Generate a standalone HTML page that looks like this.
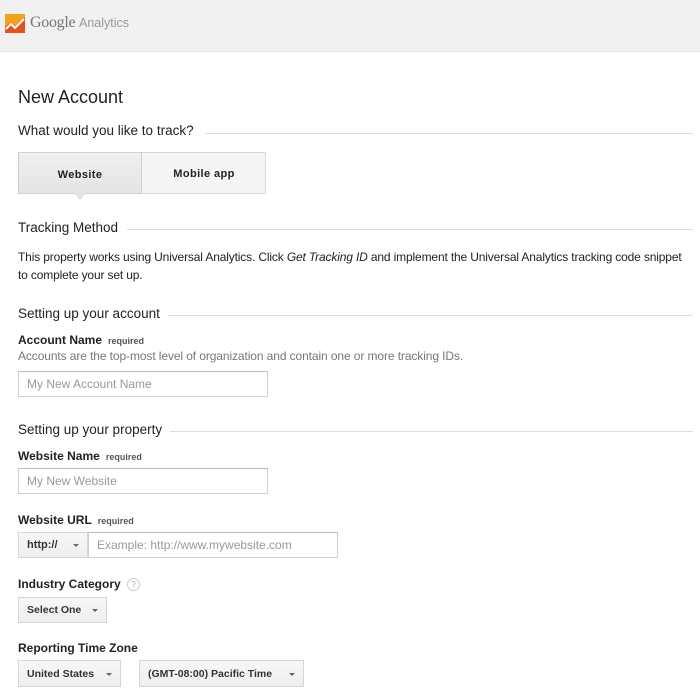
<!DOCTYPE html>
<html><head><meta charset="utf-8"><style>
*{margin:0;padding:0;box-sizing:border-box}
body{width:700px;height:695px;background:#fff;font-family:"Liberation Sans",Arial,sans-serif;color:#222;position:relative;overflow:hidden}
.a{position:absolute;white-space:nowrap}
.hdr{position:absolute;left:0;top:0;width:700px;height:52px;background:#f1f1f1;border-bottom:1px solid #e4e4e4}
.h2{font-size:13.5px;color:#222}
.line{position:absolute;height:1px;background:#ddd}
.lbl{font-size:12px;font-weight:bold;color:#222}
.req{font-size:9px;font-weight:bold;color:#555;margin-left:6px}
.inp{position:absolute;border:1px solid #cfcfcf;border-top-color:#bbb;background:#fff;font-size:12px;color:#999;padding-left:8px;display:flex;align-items:center}
.sel{position:absolute;border:1px solid #d6d6d6;background:linear-gradient(#f7f7f7,#eeeeee);font-size:11px;font-weight:bold;color:#333;padding-left:8px;display:flex;align-items:center;letter-spacing:0}
.car{position:absolute;right:8px;top:50%;margin-top:-1px;border:3px solid transparent;border-top:3px solid #666;border-bottom:0;width:0;height:0}
</style></head><body>
<div class="hdr"></div>
<svg class="a" style="left:5px;top:14px" width="20" height="19" viewBox="0 0 20 19">
<rect width="20" height="19" fill="#f7a01c"/>
<path d="M0 19V13L6 8l4 4 10-9v16z" fill="#e2521f"/>
<path d="M1 15l5-5 4 4 9-9" stroke="#fff" stroke-width="2" fill="none"/>
</svg>
<div class="a" style="left:30px;top:14px;font-family:'Liberation Serif',serif;font-size:16px;color:#777;letter-spacing:-0.3px">Google</div>
<div class="a" style="left:79px;top:16px;font-size:12.5px;color:#999">Analytics</div>

<div class="a" style="left:18px;top:87px;font-size:18px;color:#222">New Account</div>

<div class="a h2" style="left:18px;top:123px">What would you like to track?</div>
<div class="line" style="left:205px;top:133px;width:488px"></div>

<div class="a" style="left:18px;top:152px;width:248px;height:42px;border:1px solid #d8d8d8;background:#f5f5f5"></div>
<div class="a" style="left:18px;top:152px;width:124px;height:42px;border:1px solid #d0d0d0;background:linear-gradient(#f0f0f0,#e4e4e4);font-size:11px;font-weight:bold;text-align:center;line-height:44px;letter-spacing:.4px">Website</div>
<div class="a" style="left:142px;top:152px;width:124px;height:42px;font-size:11px;font-weight:bold;text-align:center;line-height:44px;letter-spacing:.4px">Mobile app</div>
<div class="a" style="left:74px;top:193px;width:0;height:0;border-left:6px solid transparent;border-right:6px solid transparent;border-top:7px solid #d8d8d8"></div>
<div class="a" style="left:75px;top:193px;width:0;height:0;border-left:5px solid transparent;border-right:5px solid transparent;border-top:6px solid #e4e4e4"></div>

<div class="a h2" style="left:18px;top:220px">Tracking Method</div>
<div class="line" style="left:127px;top:229px;width:566px"></div>
<div class="a" style="left:18px;top:248px;font-size:12px;line-height:18px;color:#222;letter-spacing:-0.15px">This property works using Universal Analytics. Click <i>Get Tracking ID</i> and implement the Universal Analytics tracking code snippet<br>to complete your set up.</div>

<div class="a h2" style="left:18px;top:306px">Setting up your account</div>
<div class="line" style="left:168px;top:315px;width:525px"></div>
<div class="a lbl" style="left:18px;top:333px">Account Name<span class="req">required</span></div>
<div class="a" style="left:18px;top:349px;font-size:12px;color:#777;letter-spacing:-0.1px">Accounts are the top-most level of organization and contain one or more tracking IDs.</div>
<div class="inp" style="left:18px;top:371px;width:250px;height:26px">My New Account Name</div>

<div class="a h2" style="left:18px;top:422px">Setting up your property</div>
<div class="line" style="left:170px;top:431px;width:523px"></div>
<div class="a lbl" style="left:18px;top:449px">Website Name<span class="req">required</span></div>
<div class="inp" style="left:18px;top:468px;width:250px;height:26px">My New Website</div>

<div class="a lbl" style="left:18px;top:513px">Website URL<span class="req">required</span></div>
<div class="sel" style="left:18px;top:532px;width:70px;height:26px">http://<span class="car"></span></div>
<div class="inp" style="left:88px;top:532px;width:250px;height:26px">Example: http://www.mywebsite.com</div>

<div class="a lbl" style="left:18px;top:577px">Industry Category <span style="display:inline-block;width:13px;height:13px;border:1px solid #ccc;border-radius:50%;font-size:8px;color:#aaa;text-align:center;line-height:11px;vertical-align:middle;margin-left:3px;font-weight:normal">?</span></div>
<div class="sel" style="left:18px;top:597px;width:89px;height:26px;font-size:10.5px">Select One<span class="car"></span></div>

<div class="a lbl" style="left:18px;top:641px">Reporting Time Zone</div>
<div class="sel" style="left:18px;top:660px;width:103px;height:27px;font-size:10.5px">United States<span class="car"></span></div>
<div class="sel" style="left:139px;top:660px;width:165px;height:27px;font-size:10.5px">(GMT-08:00) Pacific Time<span class="car"></span></div>
</body></html>
